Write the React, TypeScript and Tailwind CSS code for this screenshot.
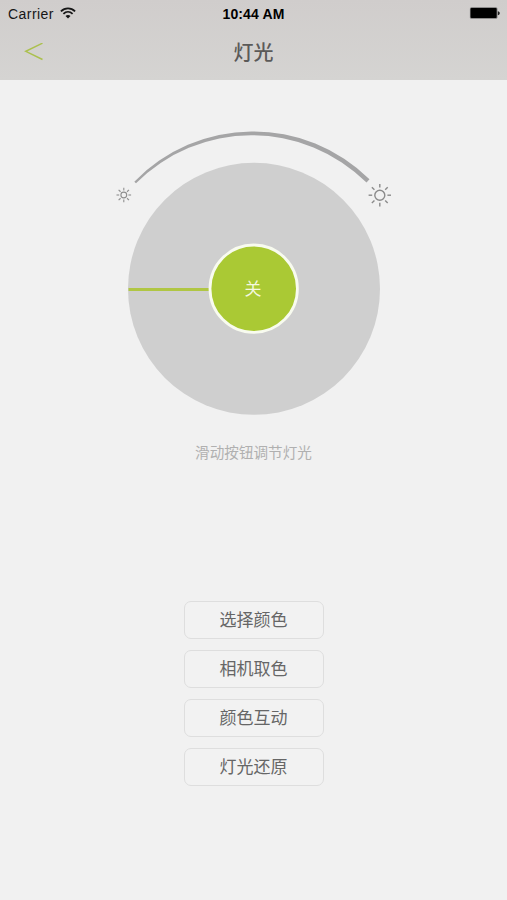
const FONT = "font-['Liberation_Sans','Noto_Sans_CJK_SC',sans-serif]";

const ACTIONS = ['选择颜色', '相机取色', '颜色互动', '灯光还原'];

function WifiIcon() {
  return (
    <svg width="16" height="12" viewBox="0 0 16 12" fill="none" stroke="#161616" strokeWidth="1.8">
      <path d="M0.9 4.3C5 .3 11 .3 15.1 4.3" />
      <path d="M3.4 6.8c2.7-2.5 6.500-2.500 9.200 0" />
      <path d="M8 11.500 5.500 8.900c1.500-1.300 3.500-1.300 5 0z" fill="#161616" stroke="none" />
    </svg>
  );
}

function BatteryIcon() {
  return (
    <svg width="32" height="12" viewBox="0 0 32 12">
      <rect x="0.900" y="0.200" width="27.500" height="11.600" rx="1.600" fill="#777" />
      <rect x="1.600" y="0.900" width="26" height="10.200" rx="1" fill="#000" />
      <path d="M28.800 4.200c2.600.4 2.600 3.600 0 4z" fill="#222" />
    </svg>
  );
}

function Rays({ cx, cy, inner, outer }: { cx: number; cy: number; inner: number; outer: number }) {
  return (
    <>
      {[0, 45, 90, 135, 180, 225, 270, 315].map((angle) => (
        <path key={angle} d={`M${cx + inner} ${cy}H${cx + outer}`} transform={`rotate(${angle} ${cx} ${cy})`} />
      ))}
    </>
  );
}

function Dial() {
  return (
    <div className="relative h-[300px] w-[300px]">
      <svg width="300" height="300" viewBox="104 120 300 300" fill="none">
        <path d="M134.300 181.700A165.500 165.500 0 0 1 369.500 179.300L366.500 182.600A163.200 163.200 0 0 0 136 183.200Z" fill="#a5a5a6" />
        <g stroke="#8f8f8f" strokeWidth="1.100">
          <circle cx="123.800" cy="195" r="2.900" />
          <Rays cx={123.8} cy={195} inner={4.6} outer={7.3} />
        </g>
        <g stroke="#8b8b8b" strokeWidth="1.400">
          <circle cx="379.800" cy="195.200" r="5" />
          <Rays cx={379.8} cy={195.2} inner={7.6} outer={11.2} />
        </g>
        <circle cx="254" cy="288.800" r="126" fill="#cfcfcf" />
        <rect x="128.500" y="288" width="82" height="3" fill="#b0c644" />
        <circle cx="253.700" cy="288.700" r="43.700" fill="#aac934" stroke="#f8fbef" strokeWidth="2.800" />
      </svg>
      <button className="absolute left-[105px] top-[124px] flex h-[90px] w-[90px] items-center justify-center rounded-full pt-0.5 pr-px text-[17px] text-[#f4f8df]">
        关
      </button>
    </div>
  );
}

export default function App() {
  return (
    <div className={`flex h-[900px] w-[507px] flex-col overflow-hidden bg-[#f1f1f1] ${FONT}`}>
      <header className="h-[79.500px] shrink-0 bg-linear-to-b from-[#d0cdcc] to-[#d5d4d2]">
        <div className="grid h-[26px] grid-cols-3 items-center pl-2 pr-1.5 text-[#161616]">
          <div className="flex items-center gap-1.5">
            <span className="pt-px text-[14px] leading-4 tracking-[0.450px]">Carrier</span>
            <WifiIcon />
          </div>
          <span className="pt-px pr-0.5 text-center text-[14px] leading-4 font-bold tracking-[0.130px] text-black">10:44 AM</span>
          <div className="flex justify-end">
            <BatteryIcon />
          </div>
        </div>
        <div className="grid h-[53px] grid-cols-3 items-center">
          <button aria-label="返回" className="w-fit pl-6">
            <svg width="20" height="20" viewBox="0 0 20 20" fill="none" stroke="#abc04e" strokeWidth="1.500">
              <path d="M18.500 .200 1.800 8.300l16.700 8.200" />
            </svg>
          </button>
          <h1 className="text-center text-[20px] leading-6 font-medium text-[#5b5a59]">灯光</h1>
        </div>
      </header>
      <main className="flex flex-1 flex-col items-center pt-10">
        <Dial />
        <p className="mt-[23px] text-[14.600px] leading-5 text-[#b0b0b0]">滑动按钮调节灯光</p>
        <div className="mt-[138px] flex flex-col gap-[11px]">
          {ACTIONS.map((label) => (
            <button
              key={label}
              className="flex h-[38px] w-[140px] items-center justify-center rounded-[7px] border border-[#dedede] bg-[#f2f2f2] pt-0.5 text-[17px] leading-6 text-[#666]"
            >
              {label}
            </button>
          ))}
        </div>
      </main>
    </div>
  );
}
